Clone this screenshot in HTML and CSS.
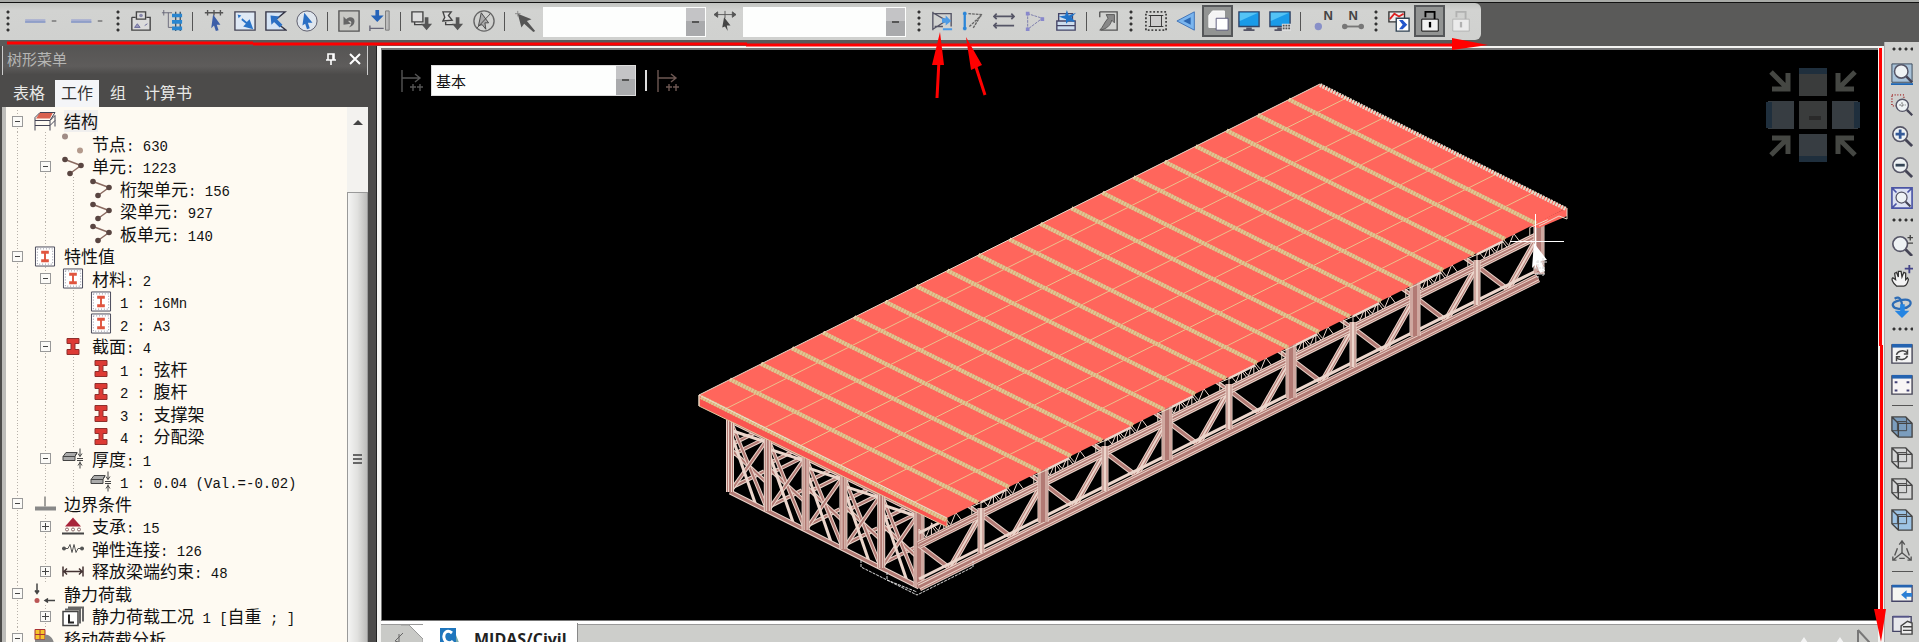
FILE: index.html
```html
<!DOCTYPE html>
<html lang="zh-CN">
<head>
<meta charset="utf-8">
<title>MIDAS/Civil</title>
<link rel="stylesheet" href="styles.css">
</head>
<body>
<svg class="sprite" aria-hidden="true">
  <symbol id="dash" viewBox="0 0 40 24"><rect x="6" y="10" width="22" height="4" fill="#9ea7d2"/><rect x="6" y="12" width="22" height="2" fill="#7f93c6"/><rect x="35" y="11" width="5" height="2" fill="#777"/></symbol>
  <symbol id="plan" viewBox="0 0 24 24"><path d="M2 8h4M18 8h4v14H2V8M7 2h10v8H7z" fill="#dcdcdc" stroke="#444" stroke-width="1.5"/><circle cx="12" cy="6" r="2" fill="#88a"/><path d="M5 19l3-4 3 4zM16 17l3-2" stroke="#669" fill="#99b"/></symbol>
  <symbol id="grid" viewBox="0 0 24 24"><path d="M1 3h11M3 0v6M8 3v16h4" fill="none" stroke="#667"/><path d="M16 2v21M21 2v21" stroke="#456" stroke-width="1.5"/><path d="M12 4h11v4H12zM12 11h11v4H12zM12 18h11v4H12z" fill="#2a86d0"/></symbol>
  <symbol id="pick" viewBox="0 0 24 24"><path d="M2 3h20M5 0v6M12 0v6M19 0v6" stroke="#555" stroke-width="1.5"/><path d="M11 5l8 11-4 0 2 6-3 1-2-6-3 3z" fill="#3c5ea8"/></symbol>
  <symbol id="window" viewBox="0 0 24 24"><path d="M1 2h22v20H1z" fill="#dfe9f5" stroke="#445" stroke-width="1.5"/><path d="M4 5l4 1-3 3zM9 9l5 4 3-3 4 11-11-3 3-3-5-4z" fill="#2a74c8"/></symbol>
  <symbol id="poly" viewBox="0 0 24 24"><path d="M22 2H1v20h22L10 12z" fill="#d5e4f5" stroke="#334" stroke-width="1.5"/><path d="M6 6l10 1-3 3 6 6-3 3-6-6-3 3z" fill="#2a6fc4"/></symbol>
  <symbol id="circle" viewBox="0 0 24 24"><circle cx="12" cy="12" r="11" fill="#dfe6ee" stroke="#556"/><path d="M9 3l9 11h-5l2 6-3 1-2-6-3 2z" fill="#2a6fc4"/></symbol>
  <symbol id="back" viewBox="0 0 24 24"><path d="M1 1h22v22H1z" fill="#c8c8c4" stroke="#555" stroke-width="1.5"/><path d="M6 16V7l3 3c4-4 9-2 9 2s-3 6-6 7c4-4 3-8-1-7l3 3z" fill="#666"/></symbol>
  <symbol id="drop" viewBox="0 0 24 24"><path d="M7 0h4v6h5l-7 7-7-7h5z" fill="#2563b8"/><path d="M1 20h15M1 17v6" stroke="#667" stroke-width="1.5"/><path d="M18 1h4v21h-4z" fill="#bbb" stroke="#777"/></symbol>
  <symbol id="boxdn" viewBox="0 0 24 24"><path d="M1 2h12v11H1zM4 13v3h10" fill="#ddd" stroke="#444" stroke-width="1.5"/><path d="M15 8h4v7h4l-6 7-6-7h4z" fill="#555"/></symbol>
  <symbol id="polydn" viewBox="0 0 24 24"><path d="M1 2h9L7 6l4 5-10 1 2-4zM4 13v3h9" fill="#ddd" stroke="#444" stroke-width="1.5"/><path d="M15 8h4v7h4l-6 7-6-7h4z" fill="#555"/></symbol>
  <symbol id="nopick" viewBox="0 0 24 24"><circle cx="12" cy="12" r="11" fill="none" stroke="#666" stroke-width="1.5"/><path d="M9 3l8 11h-4l1 7-4-5-4 1zM19 4L4 20" fill="#aaa" stroke="#444"/></symbol>
  <symbol id="arrow" viewBox="0 0 24 24"><path d="M3 4l15 6-5 2 9 11-2 1-10-9-3 4z" fill="#555"/><path d="M0 4h6M3 1v6" stroke="#888"/></symbol>
  <symbol id="spanpick" viewBox="0 0 24 24"><path d="M0 5h24M0 5l4-3v6zM24 5l-4-3v6zM12 1v8" fill="#555" stroke="#555"/><path d="M11 8l7 9h-4l1 6-3-5-3 1z" fill="#444"/></symbol>
  <symbol id="vw1" viewBox="0 0 24 24"><path d="M2 2v20M2 4h20v14M2 3l14 8M2 21l14-9M4 18h9" fill="none" stroke="#556" stroke-width="1.5"/><path d="M12 9h4V6l6 6-6 5v-3h-4zM13 20h10v2H13z" fill="#4d9be6"/></symbol>
  <symbol id="vw2" viewBox="0 0 24 24"><path d="M3 2v20M1 4h4M1 20h4" stroke="#2b86d8" stroke-width="2.5"/><path d="M7 4l14 1-9 15M8 18L21 6" fill="none" stroke="#666" stroke-width="1.5" stroke-dasharray="3 1"/></symbol>
  <symbol id="vw3" viewBox="0 0 24 24"><path d="M1 7h22M1 17h22M4 4l-3 3 3 3M4 14l-3 3 3 3M20 4l3 3-3 3" fill="none" stroke="#556" stroke-width="1.8"/></symbol>
  <symbol id="vw4" viewBox="0 0 24 24"><path d="M4 3v18l16-12L4 4" fill="none" stroke="#77a" stroke-dasharray="3 1"/><path d="M2 2h4v4H2zM2 19h4v4H2zM18 8h4v4h-4z" fill="#88c"/></symbol>
  <symbol id="vw5" viewBox="0 0 24 24"><path d="M2 12h20v10H2zM2 17h20M4 12V4h15v8" fill="#cde" stroke="#446" stroke-width="1.5"/><path d="M13 0l2 6 8-3-5 5 4 5-7-1-3 3 0-5-8-3 7-1z" fill="#1f72c8"/></symbol>
  <symbol id="undoarr" viewBox="0 0 24 24"><path d="M3 2h19v20H4M3 2v6" fill="none" stroke="#555" stroke-width="1.5"/><path d="M10 5h9v9l-3-3c-1 6-6 10-13 11 4-4 4-7 9-13z" fill="#888" stroke="#555"/></symbol>
  <symbol id="frame" viewBox="0 0 24 24"><path d="M1 2h22v20H1z" fill="none" stroke="#444" stroke-width="2" stroke-dasharray="2 2"/><path d="M6 6h12v12H6zM4 6h16M4 18h16" fill="#ccc" stroke="#333"/></symbol>
  <symbol id="horn" viewBox="0 0 24 24"><path d="M1 12L20 2v20z" fill="#7ab5ee" stroke="#3b6fb5"/><path d="M8 12l8-4v8z" fill="#2c67b2"/></symbol>
  <symbol id="pages" viewBox="0 0 24 24"><path d="M6 1h13v8h-9v10H2V6z" fill="#f4f4f4" stroke="#fff"/><path d="M10 9h13v13H10z" fill="#fff" stroke="#557"/></symbol>
  <symbol id="screen" viewBox="0 0 24 24"><path d="M1 2h22v16H1z" fill="#1a9be8" stroke="#346" stroke-width="1.5"/><path d="M2 3h20l-20 9z" fill="#54c3f5"/><path d="M9 19h6v2h3v2H6v-2h3z" fill="#556"/></symbol>
  <symbol id="screen2" viewBox="0 0 24 24"><use href="#screen"/><path d="M14 15h10v8H14z" fill="#ddd"/><path d="M15 17h8M15 20h8" stroke="#555" stroke-width="2" stroke-dasharray="2 1"/></symbol>
  <symbol id="pin1" viewBox="0 0 24 24"><circle cx="8" cy="18" r="4" fill="#8890c8"/></symbol>
  <symbol id="pin2" viewBox="0 0 24 24"><path d="M3 18h18" stroke="#777" stroke-width="2"/><circle cx="3" cy="18" r="3" fill="#777"/><circle cx="21" cy="18" r="3" fill="#777"/></symbol>
  <symbol id="multi" viewBox="0 0 24 24"><path d="M1 2h17v11H1z" fill="#eee" stroke="#333" stroke-width="1.5"/><path d="M2 10l5-6 5 3 5-3" fill="none" stroke="#d22" stroke-width="2"/><path d="M9 9h14v14H9z" fill="#fff" stroke="#345" stroke-width="1.5"/><path d="M12 11h4l5 5-5 5h-4l4-5z" fill="#25c"/></symbol>
  <symbol id="lock" viewBox="0 0 24 24"><path d="M7 8V2h10v8" fill="none" stroke="currentColor" stroke-width="2"/><path d="M3 10h18v13H3z" fill="#f2f2f2" stroke="currentColor"/><path d="M12 13v6" stroke="currentColor" stroke-width="2.5"/></symbol>
  <symbol id="lens" viewBox="0 0 24 24"><circle cx="10" cy="10" r="8" fill="#eef2f4" stroke="#556" stroke-width="1.8"/><path d="M16 16l7 7" stroke="#445" stroke-width="3"/></symbol>
  <symbol id="zfit" viewBox="0 0 24 24"><path d="M1 1h22v20H1z" fill="#a9c2d8" stroke="#345"/><use href="#lens" width="22" height="22" x="2"/><path d="M0 23h24" stroke="#1f67b4" stroke-width="2"/></symbol>
  <symbol id="zwin" viewBox="0 0 24 24"><path d="M1 1h13v12H1z" fill="none" stroke="#a44" stroke-dasharray="1 2" stroke-width="2"/><use href="#lens" width="20" height="20" x="4" y="4"/><path d="M9 12h7M12 9v6" stroke="#666" stroke-dasharray="2 1"/></symbol>
  <symbol id="zin" viewBox="0 0 24 24"><use href="#lens"/><path d="M5 10h10M10 5v10" stroke="#345a98" stroke-width="3"/></symbol>
  <symbol id="zout" viewBox="0 0 24 24"><use href="#lens"/><path d="M5 10h10" stroke="#345" stroke-width="3"/></symbol>
  <symbol id="zall" viewBox="0 0 24 24"><path d="M1 1h22v22H1zM1 1l5 5M23 1l-5 5M1 23l5-5" fill="#dde2f2" stroke="#4b55a5" stroke-width="1.8"/><use href="#lens" width="18" height="18" x="4" y="4"/></symbol>
  <symbol id="zdyn" viewBox="0 0 24 24"><use href="#lens" y="1"/><path d="M18 4h6M21 1v6M18 10h6" stroke="#444" stroke-width="1.5"/></symbol>
  <symbol id="hand" viewBox="0 0 24 24"><path d="M6 23c-4-3-6-8-4-9l3 2-1-7 2-1 2 5 0-6 3 0 1 6 2-5 2 1 0 7 2-2 1 2c-1 4-3 7-5 7z" fill="#f4f4f4" stroke="#333" stroke-width="1.4"/><path d="M20 0v9M15 4h9" stroke="#448" stroke-width="2"/></symbol>
  <symbol id="rot" viewBox="0 0 24 24"><path d="M4 3c6-4 8 3 8 8s-9 3-10-1 14-8 18-5-1 9-8 8" fill="none" stroke="#2d6cb5" stroke-width="2.5"/><path d="M10 9h5v7h5l-8 8-8-8h6z" fill="#2585e2"/></symbol>
  <symbol id="redraw" viewBox="0 0 24 24"><path d="M1 2h22v20H1z" fill="#f4f4f4" stroke="#445" stroke-width="1.5"/><path d="M1 1h22v4H1z" fill="#2463b0"/><path d="M6 13c1-5 9-6 12-2M18 14c-2 5-9 5-12 2M18 7v5h-4M6 20v-5h4" fill="none" stroke="#444" stroke-width="1.6"/></symbol>
  <symbol id="initv" viewBox="0 0 24 24"><path d="M1 2h22v20H1z" fill="#f8f5f5" stroke="#445" stroke-width="1.5"/><path d="M1 1h22v4H1z" fill="#2463b0"/><path d="M4 8h3v2H4zM17 8h3v2h-3zM4 17h3v2H4zM17 17h3v2h-3z" fill="#447"/></symbol>
  <symbol id="cube" viewBox="0 0 24 24"><path d="M1 1h15l7 7v15H8l-7-7zM8 8h15M8 8v15M1 1l7 7" stroke="#444" stroke-width="1.5"/><path d="M7 6h10v10H7zM1 16l6 0M17 6V1" fill="none" stroke="#444"/></symbol>
  <symbol id="axis" viewBox="0 0 24 24"><path d="M12 14V2M12 14L2 22M12 14l10 8M9 5l3-4 3 4M2 18v4h4M22 18v4h-4M7 9l-3 8M17 9l3 8M9 20h6" fill="none" stroke="#555" stroke-width="1.5"/></symbol>
  <symbol id="next" viewBox="0 0 24 24"><path d="M1 4h22v17H1z" fill="#f6f6f2" stroke="#446" stroke-width="1.5"/><path d="M1 3h22v3H1z" fill="#2463b0"/><path d="M11 14l6-5v3h6v4h-6v3z" fill="#2a7fd4"/></symbol>
  <symbol id="hold" viewBox="0 0 24 24"><path d="M2 4h20v16H2z" fill="#e8e8ec" stroke="#446" stroke-width="1.5"/><path d="M2 3h18v2H2z" fill="#558"/><path d="M11 23V14l7-5 5 2v12zM13 15h10M13 19h10" fill="#eee" stroke="#444" stroke-width="1.5"/></symbol>
  <symbol id="t-struct" viewBox="0 0 22 20"><path d="M6 1h13l-3 6H2z" fill="#d9624f"/><path d="M1 6l5-5h15l-5 8v10M1 6v13M1 9h15l5-5v11M1 14h15l5-5" fill="none" stroke="#445"/></symbol>
  <symbol id="t-node" viewBox="0 0 22 20"><circle cx="3" cy="3" r="3" fill="#a08c86"/><circle cx="18" cy="17" r="3" fill="#b39a8c"/></symbol>
  <symbol id="t-elem" viewBox="0 0 22 20"><path d="M3 3l16 6L8 17" fill="none" stroke="#8a6a60" stroke-width="1.5"/><circle cx="3" cy="3" r="2.8" fill="#594541"/><circle cx="19" cy="9" r="2.8" fill="#594541"/><circle cx="8" cy="17" r="2.8" fill="#594541"/></symbol>
  <symbol id="t-prop" viewBox="0 0 22 22"><path d="M1 1h20v20H1z" fill="#fff" stroke="#445"/><path d="M3 3h16v16H3z" fill="none" stroke="#889" stroke-dasharray="1 2"/><path d="M7 5h8v3h-3v6h3v3H7v-3h3V8H7z" fill="#e0553f"/></symbol>
  <symbol id="t-sec" viewBox="0 0 22 20"><path d="M5 2h12v5h-4v6h4v5H5v-5h4V7H5z" fill="#dd3a34" stroke="#8e2f2c"/></symbol>
  <symbol id="t-thick" viewBox="0 0 22 20"><path d="M1 8l3-4h11l-2 4zM1 8h12v4H1zM13 8l2-4" fill="#aaa" stroke="#444"/><path d="M18 0v8M16 5l2 3 2-3M15 10h6M15 12h6M18 20v-7M16 17l2-3 2 3" fill="none" stroke="#444"/></symbol>
  <symbol id="t-bound" viewBox="0 0 22 20"><path d="M11 3v10" stroke="#444"/><path d="M1 13h21v4H1z" fill="#888"/></symbol>
  <symbol id="t-supp" viewBox="0 0 22 20"><path d="M11 1l8 9H3z" fill="#a8243a"/><g fill="#fff" stroke="#866"><circle cx="5" cy="13" r="1.5"/><circle cx="11" cy="13" r="1.5"/><circle cx="17" cy="13" r="1.5"/></g><path d="M0 17h22" stroke="#444" stroke-width="2"/></symbol>
  <symbol id="t-spring" viewBox="0 0 22 20"><path d="M0 10h6l2-4 2 8 2-8 2 8 2-4h6" fill="none" stroke="#555"/><circle cx="2" cy="10" r="2" fill="#555"/><circle cx="20" cy="10" r="2" fill="#555"/></symbol>
  <symbol id="t-rel" viewBox="0 0 22 20"><path d="M1 5v10M21 5v10M1 10h20M5 7l-3 3 3 3M17 7l3 3-3 3" fill="none" stroke="#433" stroke-width="1.5"/></symbol>
  <symbol id="t-load" viewBox="0 0 22 20"><path d="M3 0v10M1 7l2 3 2-3M21 17H11M14 15l-3 2 3 2" fill="#444" stroke="#444" stroke-width="1.5"/><circle cx="3" cy="17" r="2.5" fill="#b55"/></symbol>
  <symbol id="t-case" viewBox="0 0 22 20"><path d="M6 1h15v14M3 3h15v14" fill="none" stroke="#666" stroke-width="2"/><path d="M1 5h15v14H1z" fill="#fff" stroke="#444" stroke-width="1.5"/><path d="M7 8v8h5" fill="none" stroke="#222" stroke-width="2"/></symbol>
  <symbol id="t-move" viewBox="0 0 22 20"><path d="M1 1h10v10H1z" fill="#f5c52c" stroke="#a33"/><path d="M6 1v10M1 6h10" stroke="#a33"/><path d="M1 11h10V6c5 0 9 5 9 10v4H1z" fill="#888"/></symbol>
  <symbol id="stage" viewBox="0 0 24 24"><path d="M2 1v22M2 9h17M15 5l5 4-5 4M13 15v7M20 15v7M10 18h6M17 18h6" fill="none" stroke="currentColor" stroke-width="1.4"/></symbol>
</svg>

<header class="ribbon">
  <div class="tools">
    <i class="grip"></i>
    <button class="tool wide" aria-label="线型"><svg><use href="#dash"/></svg></button><button class="tool wide" aria-label="线宽"><svg><use href="#dash"/></svg></button>
    <i class="grip first"></i>
    <button class="tool" aria-label="平面"><svg><use href="#plan"/></svg></button><button class="tool" aria-label="栅格"><svg><use href="#grid"/></svg></button>
    <i class="sep"></i>
    <button class="tool" aria-label="单选"><svg><use href="#pick"/></svg></button><button class="tool" aria-label="窗口选择"><svg><use href="#window"/></svg></button><button class="tool" aria-label="多边形选择"><svg><use href="#poly"/></svg></button><button class="tool" aria-label="圆形选择"><svg><use href="#circle"/></svg></button>
    <i class="sep"></i>
    <button class="tool" aria-label="前次选择"><svg><use href="#back"/></svg></button><button class="tool" aria-label="平面选择"><svg><use href="#drop"/></svg></button>
    <i class="sep"></i>
    <button class="tool" aria-label="窗口解除"><svg><use href="#boxdn"/></svg></button><button class="tool" aria-label="多边形解除"><svg><use href="#polydn"/></svg></button><button class="tool" aria-label="全部解除"><svg><use href="#nopick"/></svg></button>
    <i class="sep"></i>
    <button class="tool" aria-label="节点选择"><svg><use href="#arrow"/></svg></button>
    <span class="combo"><select aria-label="节点号"><option></option></select></span>
    <button class="tool mid" aria-label="单元选择"><svg><use href="#spanpick"/></svg></button>
    <span class="combo"><select aria-label="单元号"><option></option></select></span>
    <i class="grip after"></i>
    <button class="tool" aria-label="激活"><svg><use href="#vw1"/></svg></button><button class="tool" aria-label="钝化"><svg><use href="#vw2"/></svg></button><button class="tool" aria-label="反向激活"><svg><use href="#vw3"/></svg></button><button class="tool" aria-label="激活属性"><svg><use href="#vw4"/></svg></button><button class="tool" aria-label="全部激活"><svg><use href="#vw5"/></svg></button>
    <i class="sep"></i>
    <button class="tool" aria-label="前次激活"><svg><use href="#undoarr"/></svg></button>
    <i class="grip last"></i>
    <button class="tool" aria-label="收缩"><svg><use href="#frame"/></svg></button><button class="tool" aria-label="透视"><svg><use href="#horn"/></svg></button><button class="tool on" aria-label="消隐"><svg><use href="#pages"/></svg></button><button class="tool" aria-label="显示"><svg><use href="#screen"/></svg></button><button class="tool" aria-label="显示选项"><svg><use href="#screen2"/></svg></button>
    <i class="sep"></i>
    <button class="tool lettered" aria-label="节点编号"><svg><use href="#pin1"/></svg><b>N</b></button><button class="tool lettered centred" aria-label="单元编号"><svg><use href="#pin2"/></svg><b>N</b></button>
    <i class="grip"></i>
    <button class="tool" aria-label="视图"><svg><use href="#multi"/></svg></button><button class="tool on" aria-label="解锁"><svg><use href="#lock"/></svg></button><button class="tool dim" aria-label="锁定"><svg><use href="#lock"/></svg></button>
  </div>
</header>

<main class="work">
  <aside class="panel">
    <div class="title"><span>树形菜单</span>
      <button aria-label="固定"><svg viewBox="0 0 12 12"><path d="M3 1h6v6H3zM1 7h10M6 7v5M8 1v6" fill="none" stroke="#fff" stroke-width="1.6"/></svg></button>
      <button aria-label="关闭"><svg viewBox="0 0 12 12"><path d="M1 1l10 10M11 1L1 11" stroke="#fff" stroke-width="2"/></svg></button>
    </div>
    <nav class="tabs"><button>表格</button><button class="active">工作</button><button>组</button><button>计算书</button></nav>
    <div class="treebox">
      <ul class="tree">
        <li class="l0"><i class="tg"></i><svg><use href="#t-struct"/></svg><span class="hl">结构</span></li>
        <li class="l1 leaf"><svg><use href="#t-node"/></svg><span>节点<code>: 630</code></span></li>
        <li class="l1"><i class="tg"></i><svg><use href="#t-elem"/></svg><span>单元<code>: 1223</code></span></li>
        <li class="l2"><svg><use href="#t-elem"/></svg><span>桁架单元<code>: 156</code></span></li>
        <li class="l2"><svg><use href="#t-elem"/></svg><span>梁单元<code>: 927</code></span></li>
        <li class="l2"><svg><use href="#t-elem"/></svg><span>板单元<code>: 140</code></span></li>
        <li class="l0"><i class="tg"></i><svg><use href="#t-prop"/></svg><span>特性值</span></li>
        <li class="l1"><i class="tg"></i><svg><use href="#t-prop"/></svg><span>材料<code>: 2</code></span></li>
        <li class="l2"><svg><use href="#t-prop"/></svg><span><code>1 : 16Mn</code></span></li>
        <li class="l2"><svg><use href="#t-prop"/></svg><span><code>2 : A3</code></span></li>
        <li class="l1"><i class="tg"></i><svg><use href="#t-sec"/></svg><span>截面<code>: 4</code></span></li>
        <li class="l2"><svg><use href="#t-sec"/></svg><span><code>1 : </code>弦杆</span></li>
        <li class="l2"><svg><use href="#t-sec"/></svg><span><code>2 : </code>腹杆</span></li>
        <li class="l2"><svg><use href="#t-sec"/></svg><span><code>3 : </code>支撑架</span></li>
        <li class="l2"><svg><use href="#t-sec"/></svg><span><code>4 : </code>分配梁</span></li>
        <li class="l1"><i class="tg"></i><svg><use href="#t-thick"/></svg><span>厚度<code>: 1</code></span></li>
        <li class="l2"><svg><use href="#t-thick"/></svg><span><code>1 : 0.04 (Val.=-0.02)</code></span></li>
        <li class="l0"><i class="tg"></i><svg><use href="#t-bound"/></svg><span>边界条件</span></li>
        <li class="l1"><i class="tg plus"></i><svg><use href="#t-supp"/></svg><span>支承<code>: 15</code></span></li>
        <li class="l1 leaf"><svg><use href="#t-spring"/></svg><span>弹性连接<code>: 126</code></span></li>
        <li class="l1"><i class="tg plus"></i><svg><use href="#t-rel"/></svg><span>释放梁端约束<code>: 48</code></span></li>
        <li class="l0"><i class="tg"></i><svg><use href="#t-load"/></svg><span>静力荷载</span></li>
        <li class="l1"><i class="tg plus"></i><svg><use href="#t-case"/></svg><span>静力荷载工况<code> 1 [</code>自重<code> ; ]</code></span></li>
        <li class="l0"><i class="tg"></i><svg><use href="#t-move"/></svg><span>移动荷载分析</span></li>
      </ul>
      <div class="scroll"><i class="up"></i><i class="thumb"></i></div>
    </div>
  </aside>

  <section class="view">
    <div class="canvas">
      <svg id="model" class="model" viewBox="382 50 1496 570" role="img" aria-label="桥梁模型"></svg>
      <div class="stagebar">
        <button class="ghost" aria-label="阶段"><svg><use href="#stage"/></svg></button>
        <span class="combo"><select aria-label="施工阶段"><option>基本</option></select></span>
        <i></i>
        <button class="ghost warm" aria-label="阶段定义"><svg><use href="#stage"/></svg></button>
      </div>
      <svg class="compass" viewBox="0 0 98 98" aria-hidden="true">
        <g fill="#3a3c3c"><path d="M35 6h28v26H35zM35 37h28v28H35z"/><path d="M4 37h26v28H4zM68 37h26v28H68zM35 70h28v26H35z" fill="#373d42"/></g>
        <path d="M35 4h28v6H35zM2 38h6v26H2zM90 38h6v26h-6zM35 92h28v6H35z" fill="#1f2f3d"/>
        <g fill="none" stroke="#454743" stroke-width="5"><path d="M7 8l16 16M24 9v16H8M91 8L75 24M74 9v16h16M7 91l16-16M24 90V74H8M91 91L75 75M74 90V74h16"/></g>
        <path d="M45 52h12v4H45z" fill="#2a2a2a"/>
      </svg>
    </div>
    <footer class="docs">
      <svg class="scrollers" viewBox="0 0 42 18"><path d="M0 0h28l14 14v4H0z" fill="#c9cac7"/><path d="M20 0h8l14 14v4" fill="none" stroke="#999"/><path d="M22 8l-8 8 6 2M18 9v9" fill="none" stroke="#666"/></svg>
      <a class="doc" href="#model"><svg viewBox="0 0 20 18"><path d="M0 1h16v17H0z" fill="#1f76bd"/><path d="M12 6c-5-4-9 0-8 5s6 6 9 3" fill="none" stroke="#fff" stroke-width="3"/><path d="M16 8l4 10h-4z" fill="#7aa"/></svg>MIDAS/Civil</a>
      <svg class="corner" viewBox="0 0 70 18"><path d="M0 18l4-6 4 6zM36 18l4-6 4 6z" fill="#f4f4f4"/><path d="M58 5v13M58 5l12 13" stroke="#777" fill="none" stroke-width="2"/></svg>
    </footer>
  </section>

  <aside class="side">
    <i class="hgrip"></i>
    <button class="tool" aria-label="自动对齐"><svg><use href="#zfit"/></svg></button>
    <button class="tool" aria-label="窗口缩放"><svg><use href="#zwin"/></svg></button>
    <button class="tool" aria-label="放大"><svg><use href="#zin"/></svg></button>
    <button class="tool" aria-label="缩小"><svg><use href="#zout"/></svg></button>
    <button class="tool" aria-label="全部"><svg><use href="#zall"/></svg></button>
    <i class="hgrip"></i>
    <button class="tool" aria-label="动态缩放"><svg><use href="#zdyn"/></svg></button>
    <button class="tool" aria-label="平移"><svg><use href="#hand"/></svg></button>
    <button class="tool" aria-label="旋转"><svg><use href="#rot"/></svg></button>
    <i class="hgrip"></i>
    <button class="tool" aria-label="重画"><svg><use href="#redraw"/></svg></button>
    <button class="tool" aria-label="初始视图"><svg><use href="#initv"/></svg></button>
    <i class="hsep"></i>
    <button class="tool blue" aria-label="等轴视图"><svg><use href="#cube"/></svg></button>
    <button class="tool clear" aria-label="顶视图"><svg><use href="#cube"/></svg></button>
    <button class="tool clear" aria-label="左视图"><svg><use href="#cube"/></svg></button>
    <button class="tool sky" aria-label="前视图"><svg><use href="#cube"/></svg></button>
    <button class="tool" aria-label="角度视图"><svg><use href="#axis"/></svg></button>
    <i class="hsep"></i>
    <button class="tool" aria-label="下一视图"><svg><use href="#next"/></svg></button>
    <button class="tool" aria-label="保留视图"><svg><use href="#hold"/></svg></button>
  </aside>
</main>

<svg class="marks" viewBox="0 0 1919 642" preserveAspectRatio="none" aria-hidden="true">
  <path d="M7 43H253M253 44H747M746 45H1240M1239 45H1460" stroke="red" stroke-width="3"/>
  <path d="M1452 38L1488 45L1452 50z" fill="red"/>
  <path d="M1880.5 48V346M1881.5 345V620" stroke="red" stroke-width="3"/>
  <path d="M1874 609L1886 609L1881 642z" fill="red"/>
  <path d="M937 98L939 60M985 95L975 64" stroke="red" stroke-width="3"/>
  <path d="M940 32L932 65H944zM966 37L971 70L982 65z" fill="red"/>
</svg>
<script src="script.js"></script>
</body>
</html>
```

FILE: styles.css
```css
* { box-sizing: border-box; }
body {
  margin: 0;
  height: 100vh;
  overflow: hidden;
  display: flex;
  flex-direction: column;
  background: #575757;
  font-family: "Noto Sans CJK SC", "Liberation Sans", sans-serif;
}
button { margin: 0; padding: 0; border: 0; background: none; color: inherit; font: inherit; }
.sprite { position: absolute; width: 0; height: 0; }

.ribbon { flex: none; height: 46px; border-top: 2px solid #a8aaa7; background: linear-gradient(#111 0 1px, #5a5a59 1px); }
.tools {
  display: flex;
  width: max-content;
  height: 37px;
  margin-top: 1px;
  padding-right: 5px;
  background: linear-gradient(#c2c4c1, #d2d3d1 20%, #d0d1cf);
  border-radius: 0 6px 6px 0;
}
.tool { position: relative; flex: none; width: 31px; height: 36px; display: grid; place-items: center; }
.tool svg { width: 22px; height: 22px; }
.wide { width: 46px; }
.wide svg { width: 40px; opacity: .8; }
.mid { width: 37px; }
.tool.on { height: 32px; margin-top: 2px; background: #929493; border: 2px solid #555759; }
.dim { color: #aaa; }
.dim svg { opacity: .8; }
.lettered b { position: absolute; top: 5px; right: 4px; font: bold 13px/16px "Liberation Sans", sans-serif; color: #444; }
.centred b { right: 10px; }
.grip { flex: none; width: 15px; margin: 6px 0 7px; background: radial-gradient(circle, #333 0 1px, transparent 2px) center top / 4px 6px repeat-y; }
.grip.first { margin-left: 3px; }
.grip.after { margin-left: 5px; }
.grip.last { margin-right: 2px; }
.sep { flex: none; width: 11px; margin: 9px 0; background: linear-gradient(#555, #555) center / 1px 100% no-repeat; }

.combo { position: relative; display: block; flex: none; width: 163px; height: 30px; margin-top: 4px; }
.tools .combo:first-of-type { margin-left: 2px; }
.combo select { width: 100%; height: 100%; appearance: none; border: 0; border-radius: 0; background: #fdfefd; padding: 0 24px 0 4px; font: 15px/30px "Noto Sans CJK SC", sans-serif; color: #111; }
.combo::after {
  content: "";
  position: absolute;
  inset: 1px 1px 1px auto;
  width: 19px;
  background: linear-gradient(#555, #555) center 13px / 7px 2px no-repeat, linear-gradient(#c4c4c6 45%, #a9aaac 45%);
  pointer-events: none;
}

.work { flex: 1; min-height: 0; display: flex; }
.panel { flex: none; width: 377px; display: flex; flex-direction: column; padding: 0 8px 0 2px; border-right: 1px solid #222; background: #4c4b4a; }
.title { display: flex; align-items: center; gap: 12px; height: 29px; padding: 0 6px 4px 4px; background: linear-gradient(#565554, #5e5c5b 70%, #4b4a49); border: solid #ccc; border-width: 0 1px; color: #b5b5b3; font-size: 15px; line-height: 22px; }
.title span { flex: 1; }
.title svg { display: block; width: 12px; height: 12px; }
.tabs { display: flex; align-items: flex-end; height: 32px; color: #e8e8e6; font-size: 16px; line-height: 25px; }
.tabs button { height: 27px; padding: 0 8px 2px; }
.tabs button:first-child { padding: 0 10px 2px 11px; }
.tabs .active { padding: 0 6px 2px; background: #f4f5f8; color: #333; margin-right: 3px; }
.tabs button:last-child { padding-left: 10px; }

.treebox { flex: 1; min-height: 0; display: flex; overflow: hidden; border-left: 4px solid #bdbcb9; background: #fefaf2; }
.tree { flex: 1; margin: 0; padding: 3px 0 0; list-style: none; color: #111; font-size: 17px; }
.tree li { --dots: repeating-linear-gradient(#b8b2ab 0 1px, transparent 1px 3px); display: flex; align-items: center; height: 22px; line-height: 22px; white-space: nowrap; background: var(--dots) 11px 0 / 1px 100% no-repeat; }
.tree li:nth-child(even) { height: 23px; }
.tree .l1 { padding-left: 28px; background: var(--dots) 11px 0 / 1px 100% no-repeat, var(--dots) 39px 0 / 1px 100% no-repeat; }
.tree .l2 { padding-left: 84px; background: var(--dots) 11px 0 / 1px 100% no-repeat, var(--dots) 39px 0 / 1px 100% no-repeat, var(--dots) 67px 0 / 1px 100% no-repeat; }
.tree .leaf { padding-left: 56px; }
.tree svg { flex: none; width: 22px; height: 21px; margin-right: 8px; }
.tree code { font: 14px "Liberation Mono", monospace; white-space: pre; }
.hl { background: #f0efee; }
.tg { flex: none; width: 11px; height: 11px; margin: 0 11px 0 6px; border: 1px solid #999; background: linear-gradient(#444, #444) center / 5px 1px no-repeat, #fbfaf7; }
.tg.plus { background: linear-gradient(#444, #444) center / 7px 1px no-repeat, linear-gradient(#444, #444) center / 1px 7px no-repeat, #fbfaf7; }
.scroll { flex: none; width: 21px; display: flex; flex-direction: column; align-items: center; background: #f3f2ef; }
.up { margin: 13px 0 67px; border: solid transparent; border-width: 0 5px 5px; border-bottom-color: #444; }
.thumb { flex: 1; width: 100%; border: 1px solid #999; border-bottom: 0; background: repeating-linear-gradient(#666 0 2px, transparent 2px 4px) center 261px / 9px 12px no-repeat, linear-gradient(90deg, #f4f4f3, #e1e1df 50%, #bcbcba); }

.view { flex: 1; min-width: 0; display: flex; flex-direction: column; border: solid #f4f4f2; border-width: 2px 6px 0 4px; }
.canvas { position: relative; flex: 1; min-height: 0; background: #000; border: solid #777; border-width: 2px 0 1px 1px; }
.model { position: absolute; inset: 0; width: 100%; height: 100%; }
.stagebar { position: relative; display: flex; align-items: center; gap: 9px; padding: 15px 18px; }
.stagebar .combo { width: 205px; height: 31px; margin: 0 0 0 -2px; }
.stagebar select { border: 1px solid #ddd; }
.stagebar > i { width: 2px; height: 21px; background: #ddd; }
.ghost { color: #555; }
.ghost svg { display: block; width: 24px; height: 24px; }
.warm { color: #6e5853; }
.compass { position: absolute; top: 14px; right: 16px; width: 98px; height: 98px; }
.docs { flex: none; height: 21px; display: flex; align-items: flex-start; padding-top: 4px; overflow: hidden; background: linear-gradient(#fff 0 3px, #999 3px 4px, #cdcecb 4px); }
.scrollers { flex: none; width: 42px; height: 18px; background: #fff; }
.doc { display: flex; gap: 14px; height: 24px; margin-top: -2px; padding: 2px 10px 0 17px; border-right: 1px solid #888; background: #fff; color: #222; font: bold 16px/28px "Open Sans", sans-serif; text-decoration: none; }
.doc svg { width: 20px; height: 18px; margin-top: 2px; }
.corner { width: 70px; height: 18px; margin-left: auto; margin-right: 8px; }

.side { flex: none; width: 35px; margin-top: -4px; display: flex; flex-direction: column; align-items: center; overflow: hidden; border-left: 1px solid #aaa; background: #cfd0ce; }
.side .tool { height: 31px; }
.hgrip { flex: none; width: 22px; height: 14px; margin-bottom: 2px; background: radial-gradient(circle, #333 0 1px, transparent 2px) left center / 6px 6px repeat-x; }
.hsep { flex: none; width: 21px; height: 11px; background: linear-gradient(#555, #555) center / 100% 1px no-repeat; }
.blue { fill: #7b9dbd; }
.clear { fill: #d5d6d6; }
.sky { fill: #9dc3e4; }

.marks { position: absolute; inset: 0; width: 100%; height: 100%; pointer-events: none; }
.steel { fill: none; stroke: #ecd6cc; }
.steel-core { fill: none; stroke: #b27a74; }
.plate { fill: #ff665c; }
.fascia { fill: #fa5450; stroke: #e0c8a0; }
.seam { stroke: #ecc08c; stroke-width: 1; }
.rib { stroke: #dda676; stroke-width: 4; }
.rib-hatch { stroke: #dec894; stroke-width: 4; stroke-dasharray: 2 1; }
.edge { fill: none; stroke: #eddccb; stroke-width: 1; }
.edge-hatch { stroke: #e4dccb; stroke-width: 4; stroke-dasharray: 2 1; }
.ground { fill: none; stroke: #ddd; stroke-width: 1; stroke-dasharray: 3 1; }
.cross { stroke: #fff; stroke-width: 1; }
```

FILE: script.js
```js
const svg = document.getElementById("model");
const NS = "http://www.w3.org/2000/svg";

function path(cls, d, width) {
  const p = document.createElementNS(NS, "path");
  p.setAttribute("class", cls);
  p.setAttribute("d", d);
  if (width) p.setAttribute("stroke-width", width);
  svg.appendChild(p);
}
const seg = (a, b) => `M${a[0]} ${a[1]}L${b[0]} ${b[1]}`;
const mix = (a, b, t) => [a[0] + (b[0] - a[0]) * t, a[1] + (b[1] - a[1]) * t];

// A hollow steel member: light flanges with a dark web and a centre line.
function member(a, b, w) {
  const d = seg(a, b);
  path("steel", d, w);
  if (w > 3) path("steel-core", d, w - 2);
  if (w > 5) path("steel", d, w - 4);
  if (w > 7) path("steel-core", d, w - 6);
}

// End face: six trusses seen end on, cross-braced.
const endTop = [730, 420], endTopR = [919, 513];
const endBot = [730, 492], endBotR = [919, 587];
for (let i = 0; i < 5; i++) {
  const t0 = mix(endTop, endTopR, i / 5), t1 = mix(endTop, endTopR, (i + 1) / 5);
  const b0 = mix(endBot, endBotR, i / 5), b1 = mix(endBot, endBotR, (i + 1) / 5);
  for (const k of [.35, .5, .95]) {
    const s = mix(t0, b0, k);
    member(s, [s[0] + 34, s[1] - 17], 4);
  }
  member(mix(t0, b0, .4), mix(t1, b1, .62), 4);
  member(t0, b1, 4);
  member(b0, t1, 4);
  member(mix(t0, b0, .15), [t1[0] - 12, b1[1] - 6], 3);
  member(t0, t1, 6);
  member([t0[0], t0[1] + 10], [t1[0], t1[1] + 4], 3);
}
member(endBot, endBotR, 5);
for (let i = 0; i < 6; i++) {
  member(mix(endTop, endTopR, i / 5), mix(endBot, endBotR, i / 5), i === 5 ? 11 : 8);
}

// Long face: ten panels, a heavy post at each pair.
const lower = i => [919 + 62 * i, 584 - 31 * i];
const upper = i => [919 + 62 * i, 545 - 31 * i];
for (let i = 0; i < 10; i++) {
  const foot = mix(lower(i), lower(i + 1), .5);
  const u = upper(i);
  member(u, foot, 5);
  member(foot, upper(i + 1), 6);
  // Short braces between the top chord and the deck edge.
  for (let k = 0; k < 3; k++) {
    const p = mix(u, upper(i + 1), k / 5);
    path("steel", `M${p[0]} ${p[1]}v-16l7 8l5 -12l6 8`, 1);
  }
  if (i > 0) member([u[0] - 18, u[1] - 12], [u[0] + 2, u[1] + 2], 4);
  member([u[0], u[1] - 12], [u[0] + 26, u[1] - 25], 3);
}
member(upper(0), upper(10), 8);
member([919, 579], [1538, 270], 3);
member([919, 587], [1538, 278], 9);
for (let i = 1; i <= 10; i++) {
  const heavy = i % 2 === 0;
  member([upper(i)[0], upper(i)[1] - (heavy ? 16 : 6)], lower(i), heavy ? 11 : 7);
}

// Deck.
const L = [699, 395], T = [1320, 84], R = [1567, 208], B = [947, 518];
path("fascia", `M${L}L${B}v9L699 406z`, 1);
path("plate", `M${L}L${T}L${R}L${B}z`);
path("plate", "M1567 208v8l-28 12l-10 -2z");
path("edge", "M1567 208v11l-8 -3l-20 10");
for (const t of [.11, .265, .41, .57, .72, .87]) {
  path("seam", seg(mix(L, B, t), mix(T, R, t)));
}
for (let i = 1; i < 20; i++) {
  const d = seg(mix(L, T, i / 20), mix(B, R, i / 20));
  path("rib", d);
  path("rib-hatch", d);
}
path("rib", seg([701, 397], [946, 520]));
path("rib-hatch", seg([701, 397], [946, 520]));
path("edge-hatch", seg([1320, 85], [1566, 209]));
path("edge", `M${B}L${L}L${T}M699 395v11`);

// Stepped gaps along the near edge.
for (let i = 0; i < 10; i++) {
  const p = mix(B, R, i / 10 + .04);
  path("edge", `M${p[0]} ${p[1] + 9}v-8l18 -8`);
}
path("ground", "M861 560v7l56 28l56 -28v-6M887 572v8l30 12");

// Pointer with its crosshair.
path("cross", "M1510 241.500h54M1535.500 214v54");
const pointer = document.createElementNS(NS, "path");
pointer.setAttribute("d", "M1534 243l13 17-6 1 4 10-5 2-4-9-4 4z");
pointer.setAttribute("fill", "#fff");
svg.appendChild(pointer);
path("ground", "M1536 262h12M1534 268h12M1535 274h10M1538 260v18M1543 258v18");
```
